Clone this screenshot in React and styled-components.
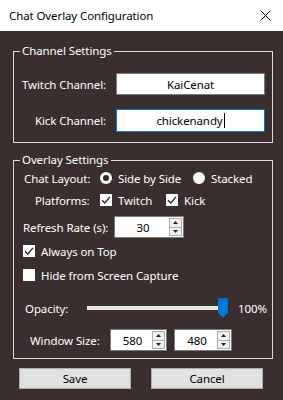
import styled, { createGlobalStyle } from 'styled-components';

const GlobalStyle = createGlobalStyle`
  html, body {
    margin: 0;
    padding: 0;
    background: #3a2e2e;
  }
  * {
    box-sizing: border-box;
  }
`;

const font = `'Noto Sans', 'Open Sans', sans-serif`;

const Window = styled.div`
  width: 283px;
  height: 400px;
  background: #3a2e2e;
  font-family: ${font};
  font-size: 11.5px;
  letter-spacing: -0.1px;
  color: #ffffff;
  display: flex;
  flex-direction: column;
  overflow: hidden;
`;

const TitleBar = styled.div`
  height: 31px;
  background: #ffffff;
  color: #000000;
  display: flex;
  align-items: center;
  justify-content: space-between;
  padding: 0 12px 0 9px;
`;

const Body = styled.div`
  display: flex;
  flex-direction: column;
  gap: 9px;
  padding: 12px 10px 0 13px;
`;

const Group = styled.fieldset`
  margin: 0;
  border: 1px solid #dcdcdc;
  padding: ${(p) => p.$pad || '0 0 8px 0'};
  min-width: 0;
  display: flex;
  flex-direction: column;
`;

const Legend = styled.legend`
  margin-left: 6px;
  padding: 0 2px;
  line-height: 16px;
  color: #ffffff;
`;

const Row = styled.div`
  display: flex;
  align-items: center;
  gap: ${(p) => p.$gap || 0}px;
  height: ${(p) => p.$h || 20}px;
  margin-top: ${(p) => p.$mt || 0}px;
  padding-left: ${(p) => p.$indent || 0}px;
  white-space: nowrap;
`;

const Label = styled.span`
  width: ${(p) => p.$w}px;
  flex: none;
  text-align: ${(p) => (p.$right ? 'right' : 'left')};
  padding-right: ${(p) => (p.$right ? 10 : 0)}px;
`;

const TextInput = styled.div`
  width: 149px;
  height: ${(p) => p.$h || 22}px;
  background: #ffffff;
  color: #000000;
  border: 1px solid ${(p) => (p.$focused ? '#0078d7' : '#7a7a7a')};
  display: flex;
  align-items: center;
  justify-content: center;
`;

const Caret = styled.span`
  display: inline-block;
  width: 1px;
  height: 15px;
  background: #000;
  margin-left: 1px;
`;

const Option = styled.span`
  display: flex;
  align-items: center;
  gap: 6px;
  width: ${(p) => (p.$w ? `${p.$w}px` : 'auto')};
  flex: none;
`;

const RadioDot = styled.span`
  width: 12px;
  height: 12px;
  border-radius: 50%;
  background: #ffffff;
  display: flex;
  align-items: center;
  justify-content: center;
  &::after {
    content: '';
    width: 6px;
    height: 6px;
    border-radius: 50%;
    background: ${(p) => (p.$on ? '#2b2b2b' : 'transparent')};
  }
`;

const Box = styled.span`
  width: 12px;
  height: 12px;
  background: #ffffff;
  display: flex;
  align-items: center;
  justify-content: center;
  flex: none;
`;

const Spin = styled.div`
  width: ${(p) => p.$w}px;
  height: 22px;
  background: #ffffff;
  border: 1px solid #7a7a7a;
  color: #000;
  display: flex;
  align-items: center;
  flex: none;
`;

const SpinValue = styled.span`
  flex: 1;
  text-align: center;
  padding-left: 2px;
`;

const SpinButtons = styled.div`
  width: 13px;
  height: 18px;
  margin-right: 1px;
  display: flex;
  flex-direction: column;
`;

const SpinButton = styled.div`
  flex: 1;
  background: #f0f0f0;
  border: 1px solid #adadad;
  margin-top: ${(p) => (p.$down ? '-1px' : '0')};
  display: flex;
  align-items: center;
  justify-content: center;
`;

const Slider = styled.div`
  width: 141px;
  height: 20px;
  flex: none;
  display: flex;
  align-items: center;
`;

const Track = styled.div`
  width: 133px;
  height: 4px;
  background: #e6e6e6;
`;

const Percent = styled.span`
  margin-left: 10px;
`;

const Buttons = styled.div`
  display: flex;
  gap: 20px;
  padding-left: 6px;
`;

const Button = styled.button`
  width: 112px;
  height: 21px;
  background: #e1e1e1;
  border: 1px solid #adadad;
  font-family: ${font};
  font-size: 11.5px;
  letter-spacing: -0.1px;
  color: #000;
  padding: 0;
`;

function Check() {
  return (
    <svg width='10' height='10' viewBox='0 0 10 10'>
      <path d='M1 5.2 L3.8 8 L9 1.8' fill='none' stroke='#222' strokeWidth='1.3' />
    </svg>
  );
}

function Arrow({ down }) {
  return (
    <svg width='5' height='3' viewBox='0 0 5 3'>
      <path d={down ? 'M0 0 H5 L2.5 3 Z' : 'M0 3 H5 L2.5 0 Z'} fill='#222' />
    </svg>
  );
}

function SpinBox({ value, width }) {
  return (
    <Spin $w={width}>
      <SpinValue>{value}</SpinValue>
      <SpinButtons>
        <SpinButton>
          <Arrow />
        </SpinButton>
        <SpinButton $down>
          <Arrow down />
        </SpinButton>
      </SpinButtons>
    </Spin>
  );
}

function Thumb() {
  return (
    <svg width='10' height='20' viewBox='0 0 10 20'>
      <path d='M0 0 H10 V15 L5 20 L0 15 Z' fill='#0078d7' />
    </svg>
  );
}

export default function App() {
  return (
    <Window>
      <GlobalStyle />
      <TitleBar>
        <span>Chat Overlay Configuration</span>
        <svg width='11' height='11' viewBox='0 0 11 11'>
          <path d='M0.5 0.5 L10.5 10.5 M10.5 0.5 L0.5 10.5' stroke='#000' strokeWidth='1' />
        </svg>
      </TitleBar>
      <Body>
        <Group $pad='0 0 10px 0'>
          <Legend>Channel Settings</Legend>
          <Row $h={22} $mt={14}>
            <Label $w={102} $right>
              Twitch Channel:
            </Label>
            <TextInput>KaiCenat</TextInput>
          </Row>
          <Row $h={23} $mt={14}>
            <Label $w={102} $right>
              Kick Channel:
            </Label>
            <TextInput $focused $h={23}>
              chickenandy
              <Caret />
            </TextInput>
          </Row>
        </Group>

        <Group $pad='0 0 7px 0'>
          <Legend>Overlay Settings</Legend>
          <Row $indent={10}>
            <Label $w={76}>Chat Layout:</Label>
            <Option $w={93}>
              <RadioDot $on />
              Side by Side
            </Option>
            <Option>
              <RadioDot />
              Stacked
            </Option>
          </Row>
          <Row $mt={2} $indent={21}>
            <Label $w={65}>Platforms:</Label>
            <Option $w={66}>
              <Box>
                <Check />
              </Box>
              Twitch
            </Option>
            <Option>
              <Box>
                <Check />
              </Box>
              Kick
            </Option>
          </Row>
          <Row $h={22} $mt={6} $indent={9}>
            <Label $w={91}>Refresh Rate (s):</Label>
            <SpinBox value='30' width={70} />
          </Row>
          <Row $mt={3} $indent={9}>
            <Option>
              <Box>
                <Check />
              </Box>
              Always on Top
            </Option>
          </Row>
          <Row $mt={4} $indent={9}>
            <Option>
              <Box />
              Hide from Screen Capture
            </Option>
          </Row>
          <Row $mt={13} $indent={11}>
            <Label $w={62}>Opacity:</Label>
            <Slider>
              <Track />
              <Thumb />
            </Slider>
            <Percent>100%</Percent>
          </Row>
          <Row $h={22} $mt={11} $indent={16} $gap={7}>
            <Label $w={73}>Window Size:</Label>
            <SpinBox value='580' width={57} />
            <SpinBox value='480' width={58} />
          </Row>
        </Group>

        <Buttons>
          <Button>Save</Button>
          <Button>Cancel</Button>
        </Buttons>
      </Body>
    </Window>
  );
}
